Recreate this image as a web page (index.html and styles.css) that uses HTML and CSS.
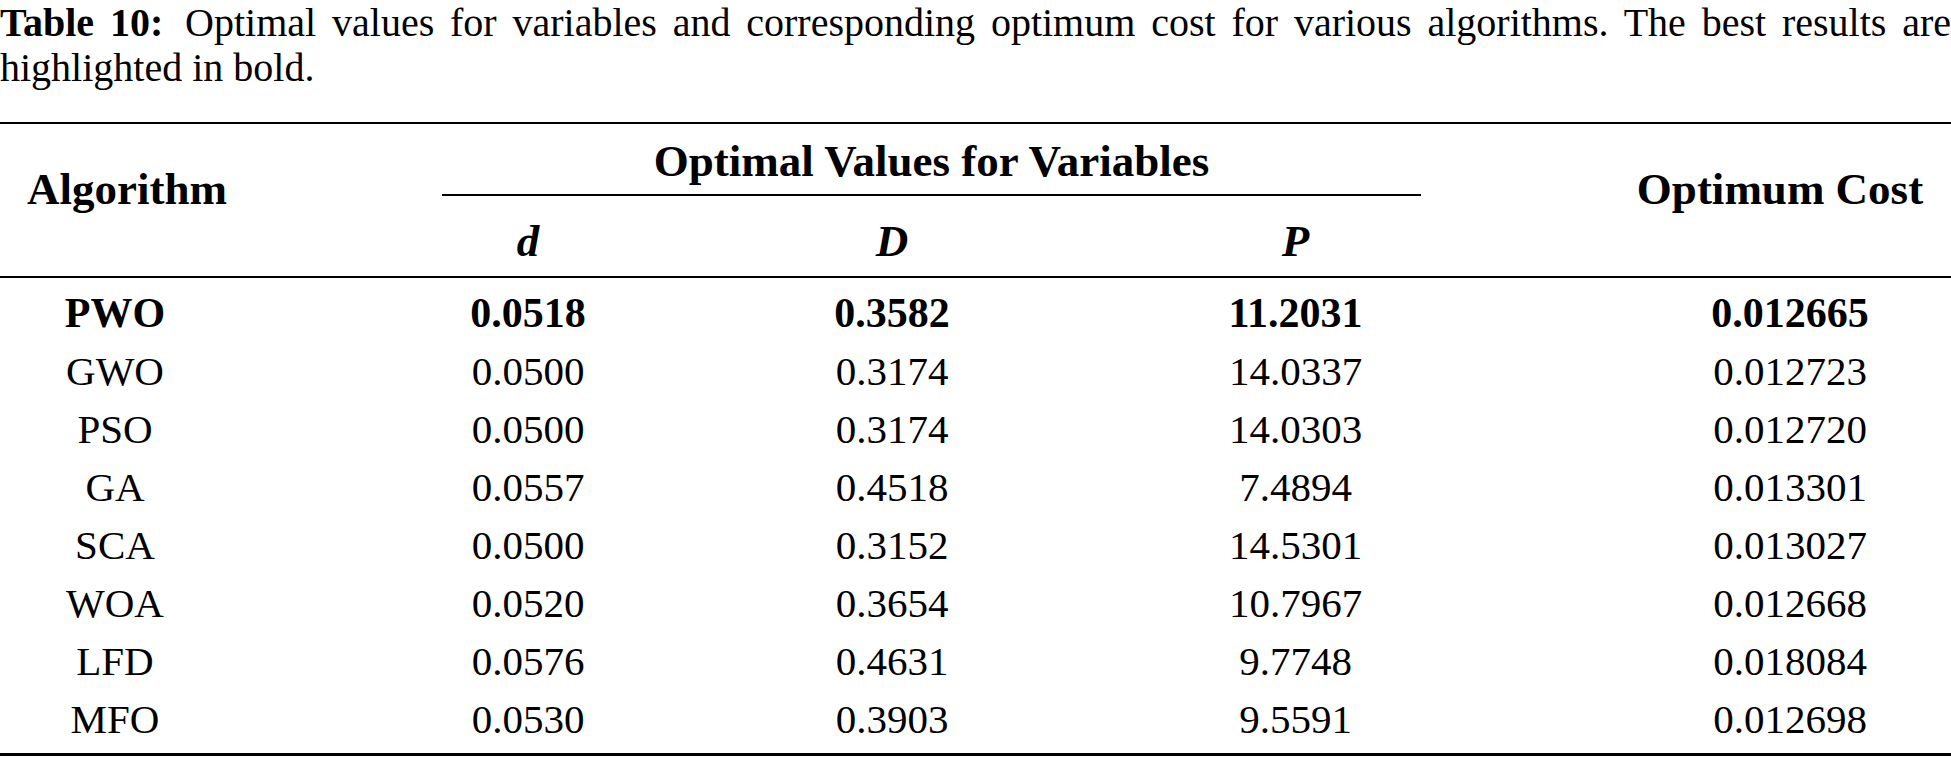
FILE: index.html
```html
<!DOCTYPE html>
<html lang="en">
<head>
<meta charset="utf-8">
<title>Table 10</title>
<link rel="stylesheet" href="styles.css">
</head>
<body>
<p class="caption"><b class="label">Table 10:</b> <span class="cap-a">Optimal values for variables and corresponding optimum cost for various algorithms. The best results are</span> <span class="cap-b">highlighted in bold.</span></p>
<div class="table">
  <div class="thead">
    <div class="th th-alg">Algorithm</div>
    <div class="th th-group">Optimal Values for Variables</div>
    <div class="th th-cost">Optimum Cost</div>
    <div class="th th-var th-d"><i>d</i></div>
    <div class="th th-var th-D"><i>D</i></div>
    <div class="th th-var th-P"><i>P</i></div>
  </div>
  <div class="tbody">
    <div class="row best"><div class="c1">PWO</div><div class="c">0.0518</div><div class="c">0.3582</div><div class="c">11.2031</div><div class="c5">0.012665</div></div>
    <div class="row"><div class="c1">GWO</div><div class="c">0.0500</div><div class="c">0.3174</div><div class="c">14.0337</div><div class="c5">0.012723</div></div>
    <div class="row"><div class="c1">PSO</div><div class="c">0.0500</div><div class="c">0.3174</div><div class="c">14.0303</div><div class="c5">0.012720</div></div>
    <div class="row"><div class="c1">GA</div><div class="c">0.0557</div><div class="c">0.4518</div><div class="c">7.4894</div><div class="c5">0.013301</div></div>
    <div class="row"><div class="c1">SCA</div><div class="c">0.0500</div><div class="c">0.3152</div><div class="c">14.5301</div><div class="c5">0.013027</div></div>
    <div class="row"><div class="c1">WOA</div><div class="c">0.0520</div><div class="c">0.3654</div><div class="c">10.7967</div><div class="c5">0.012668</div></div>
    <div class="row"><div class="c1">LFD</div><div class="c">0.0576</div><div class="c">0.4631</div><div class="c">9.7748</div><div class="c5">0.018084</div></div>
    <div class="row"><div class="c1">MFO</div><div class="c">0.0530</div><div class="c">0.3903</div><div class="c">9.5591</div><div class="c5">0.012698</div></div>
  </div>
</div>
</body>
</html>
```
FILE: styles.css
```css
html, body {
  margin: 0;
  padding: 0;
  background: #ffffff;
  color: #000000;
}
body {
  font-family: "Liberation Serif", "Times New Roman", serif;
  width: 1951px;
  overflow: hidden;
}
.caption {
  margin: 0;
  font-size: 40px;
  line-height: 45px;
  text-align: justify;
}
.label {
  font-weight: bold;
  margin-right: 6px;
}
.table {
  margin-top: 32px;
  border-top: 2px solid #000;
  border-bottom: 3px solid #000;
}
.thead {
  display: grid;
  grid-template-columns: 442px 172px 556px 251px 1fr;
  grid-template-rows: auto auto;
  border-bottom: 2px solid #000;
  font-weight: bold;
  font-size: 45px;
  line-height: 50px;
}
.th {
  text-align: center;
}
.th-alg {
  grid-column: 1;
  grid-row: 1 / 3;
  padding: 40px 188px 0 0;
}
.th-group {
  grid-column: 2 / 5;
  grid-row: 1;
  padding: 12px 0 8px;
  border-bottom: 2px solid #000;
}
.th-cost {
  grid-column: 5;
  grid-row: 1 / 3;
  padding: 40px 0 0 188px;
}
.th-var {
  grid-row: 2;
  padding: 20px 0 10px;
}
.th-var i {
  font-style: italic;
}
.th-d { grid-column: 2; }
.th-D { grid-column: 3; }
.th-P { grid-column: 4; }
.tbody {
  padding: 6px 0 5px;
  font-size: 41px;
  line-height: 58px;
}
.row {
  display: grid;
  grid-template-columns: 442px 172px 556px 251px 1fr;
  text-align: center;
}
.row.best {
  font-weight: bold;
  font-size: 42px;
}
.c1 {
  padding-right: 212px;
}
.c5 {
  padding-left: 208px;
}
```
